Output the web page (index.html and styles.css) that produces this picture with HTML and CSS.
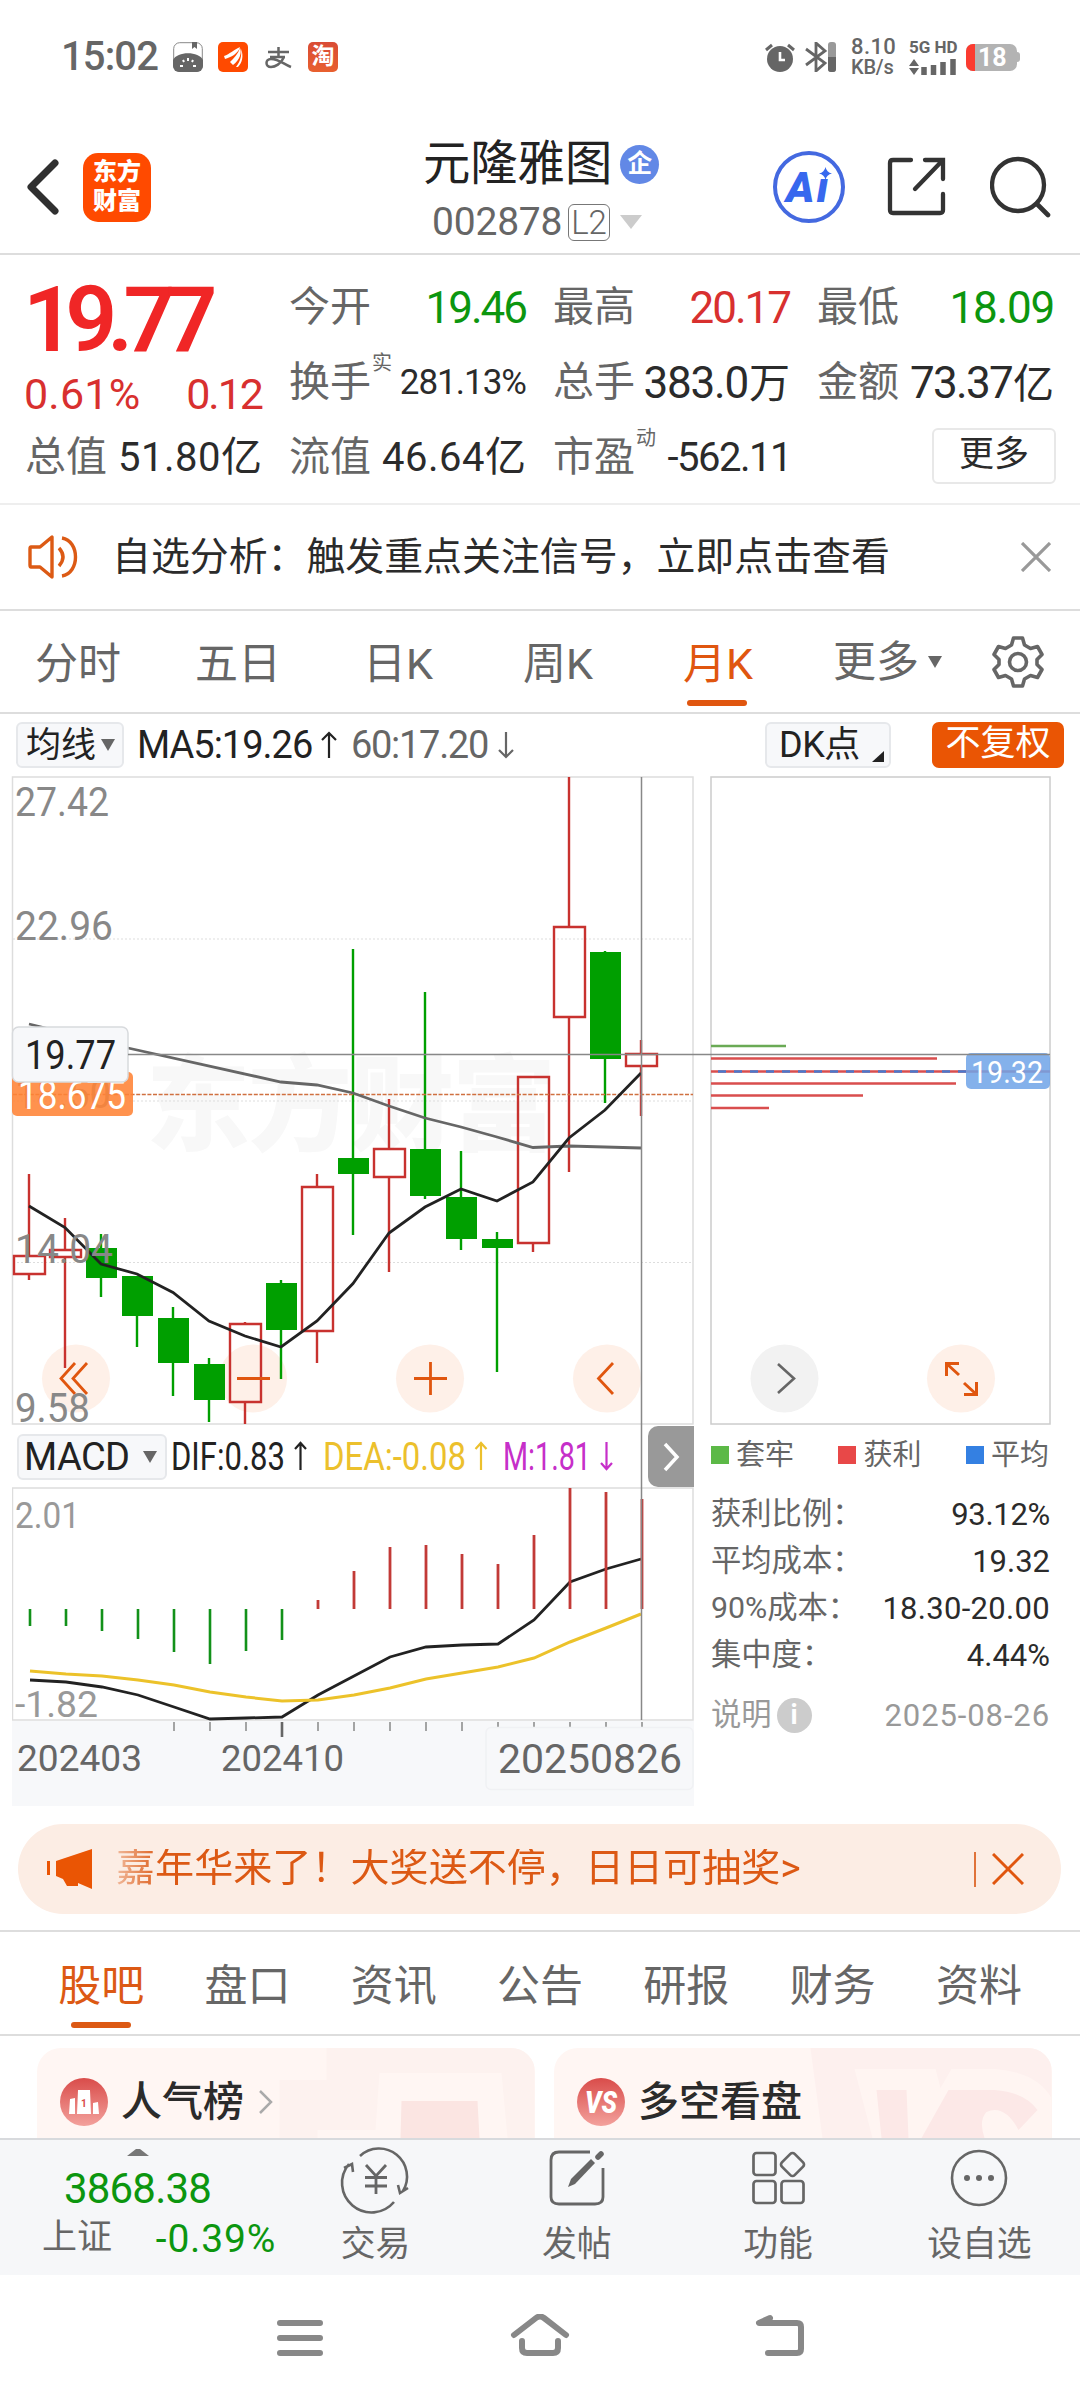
FILE: index.html
```html
<!DOCTYPE html>
<html lang="zh-CN">
<head>
<meta charset="utf-8">
<title>元隆雅图 002878</title>
<link rel="stylesheet" href="styles.css">
</head>
<body>
<div class="statusbar">
  <span class="clock">15:02</span>
  <svg class="app-ic" viewBox="0 0 30 30"><rect x=".7" y=".7" width="28.6" height="28.6" rx="6" fill="#fff" stroke="#888" stroke-width="1"/><path d="M0 18C4 9 26 9 30 18V24a6 6 0 0 1-6 6H6a6 6 0 0 1-6-6z" fill="#666"/><path d="M19 0h5v7l-2.500-2-2.500 2z" fill="#666"/><path d="M15 16v3M10 18l1 2M20 18l-1 2M7 24h3M20 24h3" stroke="#fff" stroke-width="2"/></svg>
  <svg class="app-ic" viewBox="0 0 30 30"><rect width="30" height="30" rx="5" fill="#ff4a00"/><path d="M6 14C12 12 15 8 22 5C20 12 13 15 7 17zM12 20C16 16 20 12 22 6C24 10 22 18 15 23zM18 25c4-5 6-11 5-18 3 7 1 14-3 18z" fill="#fff"/></svg>
  <svg class="app-ic" viewBox="0 0 30 30"><path d="M5 10h21M15.500 5v9M7 15h15M21 15c-3 7-9 10-13 10-6 0-6-8 0-8 8 0 12 5 20 8" fill="none" stroke="#666" stroke-width="2.500"/></svg>
  <span class="taobao">淘</span>
  <svg class="alarm" viewBox="0 0 30 30"><circle cx="15" cy="17" r="13" fill="#666"/><path d="M1 8l6-5M29 8l-6-5" stroke="#666" stroke-width="3"/><path d="M15 10v8h5" fill="none" stroke="#fff" stroke-width="2.600"/></svg>
  <svg class="bt" viewBox="0 0 32 30"><path d="M2 7l19 14-9 8V1l9 8L2 23" fill="none" stroke="#666" stroke-width="2.800"/><rect x="24" y="0" width="8" height="30" rx="3" fill="#999"/><path d="M24 15h8v12a3 3 0 0 1-3 3h-2a3 3 0 0 1-3-3z" fill="#666"/></svg>
  <span class="speed"><b>8.10</b><b>KB/s</b></span>
  <span class="net"><b>5G HD</b><svg viewBox="0 0 48 16" width="48" height="16"><path d="M5 0l5 7H0zM5 16l5-7H0z" fill="#666"/><path d="M15 16V8M24.500 16V6M34 16V3M44 16V0" stroke="#666" stroke-width="5.500"/></svg></span>
  <span class="battery"><i></i>18</span><span class="nub"></span>
</div>

<header class="header">
  <svg class="back" viewBox="0 0 32 56"><path d="M28 4L4 28l24 24" fill="none" stroke="#303030" stroke-width="7" stroke-linecap="round" stroke-linejoin="round"/></svg>
  <div class="logo">东方<br>财富</div>
  <div class="stock">
    <div class="name">元隆雅图<span class="badge-q">企</span></div>
    <div class="code"><span>002878</span><em>L2</em><svg width="22" height="14"><path d="M0 0h22L11 14z" fill="#ccc"/></svg></div>
  </div>
  <div class="ai"><span>A<u>ı</u></span><svg viewBox="0 0 12 12"><path d="M6 0Q7 5 12 6Q7 7 6 12Q5 7 0 6Q5 5 6 0z" fill="#3768ee"/></svg></div>
  <svg class="share" viewBox="0 0 60 60"><path d="M24 3H6Q3 3 3 6V53Q3 56 6 56H53Q56 56 56 53V37M38 3H56V22M55 4L28 32" fill="none" stroke="#333" stroke-width="4.300" stroke-linecap="round"/></svg>
  <svg class="search" viewBox="0 0 62 62"><circle cx="28" cy="29" r="26" fill="none" stroke="#333" stroke-width="4.300"/><path d="M47 48l11 11" stroke="#333" stroke-width="4.600" stroke-linecap="round"/></svg>
</header>

<section class="quote">
  <div class="qcol">
    <div class="price">19.77</div>
    <div class="cell chg"><span>0.61%</span><span>0.12</span></div>
    <div class="cell"><label>总值</label><span class="s">51.80<i>亿</i></span></div>
  </div>
  <div class="qcol">
    <div class="cell"><label>今开</label><span class="n g">19.46</span></div>
    <div class="cell"><label>换手<sup>实</sup></label><span class="xs">281.13%</span></div>
    <div class="cell"><label>流值</label><span class="s">46.64<i>亿</i></span></div>
  </div>
  <div class="qcol">
    <div class="cell"><label>最高</label><span class="n r">20.17</span></div>
    <div class="cell"><label>总手</label><span class="n w">383.0<i>万</i></span></div>
    <div class="cell"><label>市盈<sup>动</sup></label><span class="s neg">-562.11</span></div>
  </div>
  <div class="qcol">
    <div class="cell"><label>最低</label><span class="n g w">18.09</span></div>
    <div class="cell"><label>金额</label><span class="n w y">73.37<i>亿</i></span></div>
    <div class="cell end"><span class="more">更多</span></div>
  </div>
</section>

<div class="notice">
  <svg class="speaker" viewBox="0 0 52 46"><path d="M3 13H12L24 3V43L12 33H3Q2 33 2 31V15Q2 13 3 13z" fill="none" stroke="#dc5a14" stroke-width="3.400" stroke-linejoin="round"/><path d="M31 14q8 9 0 18M34 4c18 3 18 35 0 38" fill="none" stroke="#dc5a14" stroke-width="3.400"/></svg>
  <span>自选分析：触发重点关注信号，立即点击查看</span>
  <svg class="close" viewBox="0 0 30 30"><path d="M1 1l28 28M29 1L1 29" stroke="#999" stroke-width="3.200"/></svg>
</div>

<nav class="ktabs">
  <span>分时</span><span>五日</span><span>日K</span><span>周K</span><span class="on">月K</span>
  <span class="mor">更多<svg width="14" height="12"><path d="M0 0h14L7 12z" fill="#666"/></svg></span>
  <svg class="gear" viewBox="0 0 52 52"><path d="M21.500 2h9l2 7 6 3.500 7-2 4.500 8-5 5v5l5 5-4.500 8-7-2-6 3.500-2 7h-9l-2-7-6-3.500-7 2-4.500-8 5-5v-5l-5-5 4.500-8 7 2 6-3.500z" fill="none" stroke="#666" stroke-width="3.600" stroke-linejoin="round"/><circle cx="26" cy="26" r="8.500" fill="none" stroke="#666" stroke-width="3.600"/></svg>
</nav>

<div class="marow">
  <span class="btn ma">均线<svg width="14" height="12"><path d="M0 0h14L7 12z" fill="#666"/></svg></span>
  <span class="ma5">MA5:19.26</span><svg class="arr" viewBox="0 0 16 28"><path d="M8 27V2M1 9l7-7 7 7" fill="none" stroke="#222" stroke-width="2.200"/></svg>
  <span class="ma60">60:17.20</span><svg class="arr" viewBox="0 0 16 28"><path d="M8 1v25M1 19l7 7 7-7" fill="none" stroke="#666" stroke-width="2.200"/></svg>
  <span class="btn dk">DK点<svg width="12" height="11"><path d="M12 0v11H0z" fill="#222"/></svg></span>
  <span class="fq">不复权</span>
</div>

<section class="charts">
  <div class="left">
    <svg class="kline" viewBox="12 776 682 650">
      <rect x="12.500" y="777" width="680.500" height="647" fill="#fff" stroke="#ddd" stroke-width="1.500"/>
      <text class="wm" x="146" y="1143" textLength="410">东方财富</text>
      <g stroke="#ddd" stroke-width="1" stroke-dasharray="2 2"><path d="M13 939H693M13 1101H693M13 1262.500H693"/></g>
      <g fill="#fef0e8"><circle cx="76" cy="1378.500" r="34"/><circle cx="253" cy="1378.500" r="34"/><circle cx="430" cy="1378.500" r="34"/><circle cx="607" cy="1378.500" r="34"/></g>
      <g stroke="#c8322f" stroke-width="2.400" fill="none">
        <path d="M29 1174V1256M29 1274V1280M65 1218V1250M65 1257V1368M245 1322V1324M245 1402V1424M317 1174V1187M317 1331V1363M389 1099V1149M389 1177V1272M533 1243V1252M569 777V927M569 1017V1172M641 1040V1054M641 1066V1116"/>
        <path d="M14 1256h31v18h-31zM50 1250h31v7h-31zM230 1324h31v78h-31zM302 1187h31v144h-31zM374 1149h31v28h-31zM518 1077h31v166h-31zM554 927h31v90h-31zM626 1054h31v12h-31z"/>
      </g>
      <path d="M101 1234V1297M137 1276V1347M173 1307V1396M209 1358V1422M281 1280V1379M353 949V1235M425 992V1199M461 1151V1250M497 1232V1372M605 951V1103" stroke="#009f00" stroke-width="2.400"/>
      <path d="M86 1248h31v30h-31zM122 1276h31v40h-31zM158 1318h31v45h-31zM194 1364h31v36h-31zM266 1283h31v47h-31zM338 1158h31v16h-31zM410 1149h31v47h-31zM446 1197h31v42h-31zM482 1239h31v9h-31zM590 952h31v107h-31z" fill="#009f00"/>
      <path d="M13 1094.500H693" stroke="#d07040" stroke-width="1.300" stroke-dasharray="4 1.600"/>
      <polyline points="29,1024 128,1048 281,1082 317,1085 353,1093 389,1106 425,1118 461,1127 497,1137 533,1147.500 569,1146 641,1148" fill="none" stroke="#666" stroke-width="2.800"/>
      <polyline points="29,1206 65,1227.500 101,1264 137,1274 173,1292.500 209,1321 245,1336 281,1347 317,1321 353,1283.500 389,1233 425,1207 461,1189 497,1201 533,1182 569,1138 605,1110 641,1073" fill="none" stroke="#222" stroke-width="2.800"/>
      <g stroke="#e0560f" stroke-width="2.800" fill="none"><path d="M75 1363l-14 15.500 14 15.500M87 1363l-14 15.500 14 15.500M237 1378.500h33M414 1378.500h33M430.500 1362v33M613 1363l-14.500 15.500 14.500 15.500"/></g>
      <g class="ylab"><text x="15" y="816" textLength="94" lengthAdjust="spacingAndGlyphs">27.42</text><text x="15" y="940" textLength="98" lengthAdjust="spacingAndGlyphs">22.96</text><text x="15" y="1263" textLength="98" lengthAdjust="spacingAndGlyphs">14.04</text><text x="15" y="1422" textLength="75" lengthAdjust="spacingAndGlyphs">9.58</text><text x="15" y="1108" textLength="96" lengthAdjust="spacingAndGlyphs">18.50</text></g>
      <rect x="12" y="1072" width="121" height="44" rx="5" fill="#ff8336" fill-opacity=".88"/>
      <text class="tag" x="18" y="1109" textLength="108" lengthAdjust="spacingAndGlyphs" fill="#fff">18.675</text>
      <rect x="12.500" y="1027" width="115.500" height="55" rx="6" fill="#f7f8fa" stroke="#d8dadd" stroke-width="1.500"/>
      <text class="tag" x="25" y="1069" textLength="91" lengthAdjust="spacingAndGlyphs" fill="#222">19.77</text>
    </svg>
    <div class="macdbar">
      <span class="btn mc">MACD<svg width="14" height="12"><path d="M0 0h14L7 12z" fill="#666"/></svg></span>
      <svg class="macdvals" viewBox="167 1426 475 61"><g font-size="39">
        <text x="171" y="1470" textLength="114" lengthAdjust="spacingAndGlyphs" fill="#222">DIF:0.83</text>
        <text x="323" y="1470" textLength="143" lengthAdjust="spacingAndGlyphs" fill="#ecc02c">DEA:-0.08</text>
        <text x="503" y="1470" textLength="88" lengthAdjust="spacingAndGlyphs" fill="#c62fc9">M:1.81</text></g>
        <g fill="none" stroke-width="2.200"><path d="M300.500 1470v-27M295 1449l5.500-6 5.500 6" stroke="#222"/><path d="M481 1470v-27M475.500 1449l5.500-6 5.500 6" stroke="#ecc02c"/><path d="M606.500 1442v27M601 1463l5.500 6 5.500-6" stroke="#c62fc9"/></g>
      </svg>
      <span class="expand"><svg width="18" height="30" viewBox="0 0 18 30"><path d="M3 2l12 13L3 28" fill="none" stroke="#fff" stroke-width="3.500"/></svg></span>
    </div>
    <svg class="macd" viewBox="12 1487 682 320">
      <rect x="12" y="1721" width="682" height="85" fill="#f7f8fa"/>
      <rect x="12.500" y="1488" width="680.500" height="232" fill="#fff" stroke="#ddd" stroke-width="1.500"/>
      <g class="ylab m"><text x="15" y="1528" textLength="65" lengthAdjust="spacingAndGlyphs">2.01</text><text x="15" y="1717" textLength="83" lengthAdjust="spacingAndGlyphs">-1.82</text></g>
      <path d="M30 1609V1626M66 1609V1626M102 1609V1631M138 1609V1639M174 1609V1652M210 1609V1664M246 1609V1651M282 1609V1640" stroke="#12911a" stroke-width="2.600"/>
      <polyline points="30,1680 66,1682 102,1687 138,1695 174,1707 210,1719 246,1718 282,1717 318,1695 354,1676 390,1657 426,1647 462,1645 498,1644 534,1620 570,1582 606,1569 641,1559" fill="none" stroke="#222" stroke-width="2.800"/>
      <polyline points="30,1671 66,1674 102,1676 138,1680 174,1685 210,1692 246,1697 282,1701 318,1700 354,1695 390,1688 426,1679 462,1673 498,1667 534,1658 570,1642 606,1628 641,1614" fill="none" stroke="#ecc22a" stroke-width="3"/>
      <path d="M318 1609V1600M354 1609V1571M390 1609V1547M426 1609V1545M462 1609V1554M498 1609V1564M534 1609V1535M570 1609V1488M606 1609V1492M642 1609V1499" stroke="#c23a37" stroke-width="2.800"/>
      <path d="M174 1722v9M210 1722v9M246 1722v9M318 1722v9M354 1722v9M390 1722v9M426 1722v9M462 1722v9M498 1722v9M534 1722v9M570 1722v9M606 1722v9M642 1722v9" stroke="#888" stroke-width="1.500"/>
      <path d="M282 1722v15" stroke="#666" stroke-width="2.600"/>
      <rect x="486" y="1727.500" width="207" height="62" rx="5" fill="#f7f8fa" stroke="#f0f1f4" stroke-width="1.500"/>
      <g fill="#666" font-size="37"><text x="17" y="1771" textLength="125" lengthAdjust="spacingAndGlyphs">202403</text><text x="221" y="1771" textLength="123" lengthAdjust="spacingAndGlyphs">202410</text><text x="498" y="1773" font-size="40" textLength="184" lengthAdjust="spacingAndGlyphs">20250826</text></g>
    </svg>
  </div>
  <div class="right">
    <svg class="chips" viewBox="710 776 341 650">
      <rect x="711" y="777" width="339" height="647" fill="#fff" stroke="#ccc" stroke-width="1.500"/>
      <g stroke-width="2.700"><path d="M711 1046H786" stroke="#6aaa55"/><path d="M711 1058.500H937M711 1071.500H1050M711 1083.500H956M711 1095.500H863M711 1108H769" stroke="#d94e4e"/><path d="M702 1071.500H966" stroke="#4a78cc" stroke-dasharray="8 8"/></g>
      <rect x="966" y="1053" width="84" height="36" rx="5" fill="#70a4e8" fill-opacity=".86"/>
      <text x="971" y="1082.500" font-size="32" textLength="72" lengthAdjust="spacingAndGlyphs" fill="#fff">19.32</text>
      <circle cx="784.500" cy="1378.500" r="34" fill="#f2f2f2"/><circle cx="961" cy="1378.500" r="34" fill="#fef0e8"/>
      <path d="M778 1364l16 14.500-16 14.500" fill="none" stroke="#666" stroke-width="2.600"/>
      <path d="M959 1363.500H946.500V1376M947 1364l12 11M964 1394.500h12.500V1382M976 1394l-12-11" fill="none" stroke="#e0560f" stroke-width="3"/>
    </svg>
    <div class="legend"><span><i class="lg"></i>套牢</span><span><i class="lr"></i>获利</span><span><i class="lb"></i>平均</span></div>
    <div class="stat"><span>获利比例：</span><b class="pct">93.12%</b></div>
    <div class="stat"><span>平均成本：</span><b>19.32</b></div>
    <div class="stat"><span>90%成本：</span><b class="rng">18.30-20.00</b></div>
    <div class="stat"><span>集中度：</span><b>4.44%</b></div>
    <div class="stat note"><span>说明<i>i</i></span><b>2025-08-26</b></div>
  </div>
  <svg class="cross" viewBox="12 776 1039 945"><path d="M641.500 777V1720M128 1054.500H1050" stroke="#888" stroke-width="1.500" fill="none"/></svg>
</section>

<div class="banner">
  <svg class="horn" viewBox="0 0 46 40"><path d="M1.500 12v14" stroke="#ea5504" stroke-width="3"/><path d="M9 12L45 0V40L31 34V37H20L16 30 9 27z" fill="#ea5504"/></svg>
  <span class="btxt">嘉年华来了！大奖送不停，日日可抽奖&gt;</span>
  <i class="vline"></i>
  <svg class="bx" viewBox="0 0 32 32"><path d="M1 1l30 30M31 1L1 31" stroke="#e0560f" stroke-width="3"/></svg>
</div>

<nav class="itabs"><span class="on">股吧</span><span>盘口</span><span>资讯</span><span>公告</span><span>研报</span><span>财务</span><span>资料</span></nav>

<div class="cards">
  <div class="card">
    <svg class="cdeco" viewBox="0 0 497 90"><path d="M289 0H497V90H470L464 25H342L338 82H280V90H242V32H289z" fill="#fdf2ef"/><path d="M364 53h76l2 37h-79z" fill="#fbe5e2"/></svg>
    <svg class="cic" viewBox="0 0 48 48"><defs><linearGradient id="gr" x2="0" y2="1"><stop stop-color="#d94c4a"/><stop offset="1" stop-color="#f3a19c"/></linearGradient></defs><circle cx="24" cy="24" r="24" fill="url(#gr)"/><path d="M10 21l5-1v16H9zM18 12h12l1 24H17zM33 25l5-1 1 12h-6z" fill="#fff"/><text x="21" y="29" font-size="10" font-weight="700" fill="#d94c4a">1</text></svg>
    <b>人气榜</b><svg class="cgo" viewBox="0 0 14 24"><path d="M1 1l11 11L1 23" fill="none" stroke="#aaa" stroke-width="2.500"/></svg>
  </div>
  <div class="card">
    <svg class="cdeco" viewBox="0 0 497 90"><path d="M256 0H497V90H268z" fill="#fdf0ee"/><path d="M300 21H381L386 40 397 21H440Q482 24 497 50V90H318z" fill="#fff5f2"/><path d="M322 42H352L354 90H327zM394 42H440Q470 44 483 62L464 82Q450 56 432 64Q424 72 430 90H367z" fill="#fce8e7"/></svg>
    <svg class="cic" viewBox="0 0 48 48"><circle cx="24" cy="24" r="24" fill="url(#gr)"/><text x="8" y="35" font-size="31" font-weight="900" font-style="italic" fill="#fff" textLength="32" lengthAdjust="spacingAndGlyphs">VS</text></svg>
    <b>多空看盘</b>
  </div>
</div>

<div class="bottombar">
  <div class="index">
    <svg width="22" height="7"><path d="M0 7L9 0h4l9 7z" fill="#777"/></svg>
    <strong>3868.38</strong>
    <p><span>上证</span><em>-0.39%</em></p>
  </div>
  <div class="act"><svg viewBox="0 0 66 60"><path d="M17 8A28 28 0 0 1 60 43M51 54A28 28 0 0 1 6 16M1 20l8-4 1 8M65 40l-8 5-2-8" fill="none" stroke="#666" stroke-width="2.600"/><path d="M23 17l10 11 10-11M33 28v18M22 29.500h22M22 38h22" fill="none" stroke="#666" stroke-width="2.800"/></svg><span>交易</span></div>
  <div class="act"><svg viewBox="0 0 66 60"><path d="M46 4H15Q7 4 7 12V49Q7 56 15 56H51Q59 56 59 49V20" fill="none" stroke="#666" stroke-width="2.800"/><path d="M54 9L57 6" stroke="#666" stroke-width="5.500" stroke-linecap="round"/><path d="M47 11l4 4-20 21-7 3 3-8z" fill="#666"/></svg><span>发帖</span></div>
  <div class="act"><svg viewBox="0 0 66 60"><g fill="none" stroke="#666" stroke-width="2.700"><rect x="8.500" y="5" width="22" height="22" rx="3"/><rect x="8.500" y="33" width="22" height="22" rx="3"/><rect x="36.500" y="33" width="22" height="22" rx="3"/><rect x="38.500" y="7.500" width="18" height="18" rx="3" transform="rotate(45 47.500 16.500)"/></g></svg><span>功能</span></div>
  <div class="act"><svg viewBox="0 0 66 60"><circle cx="33" cy="30" r="27" fill="none" stroke="#666" stroke-width="2.600"/><g fill="#666"><circle cx="21" cy="30" r="3"/><circle cx="33" cy="30" r="3"/><circle cx="45" cy="30" r="3"/></g></svg><span>设自选</span></div>
</div>

<div class="sysnav">
  <svg viewBox="0 0 60 48"><path d="M10 9H50M10 24H50M10 39H50"/></svg>
  <svg viewBox="0 0 60 48"><path d="M4 21L26 4Q30 1 34 4L56 21M12 27V34Q12 39 17 39H43Q48 39 48 34V27"/></svg>
  <svg viewBox="0 0 60 48"><path d="M20 4L9 9H47Q51 9 51 13V35Q51 39 47 39H18"/></svg>
</div>
</body>
</html>
```
FILE: styles.css
```css
* { box-sizing: border-box; }
body {
  margin: 0;
  width: 1080px;
  height: 2400px;
  overflow: hidden;
  background: #fff;
  color: #2b2b2b;
  font-family: Roboto, "Noto Sans CJK SC", sans-serif;
  line-height: 1;
}
svg { display: block; flex: none; }
i, em { font-style: normal; }

/* Status bar */
.statusbar { height: 112px; display: flex; align-items: center; padding: 2px 0 0 61px; color: #666; }
.clock { width: 112px; font-size: 40px; font-weight: 500; letter-spacing: -.9px; white-space: nowrap; }
.app-ic { width: 30px; height: 30px; margin-right: 15px; }
.taobao { width: 30px; height: 30px; border-radius: 5px; background: linear-gradient(#d94c35, #e8602f); color: #fff; font-size: 23px; line-height: 29px; font-weight: 700; text-align: center; }
.alarm { width: 30px; height: 30px; margin-left: 427px; }
.bt { width: 32px; height: 30px; margin-left: 9px; }
.speed { width: 44px; margin-left: 15px; font-size: 20px; display: flex; flex-direction: column; white-space: nowrap; }
.speed b { font-weight: 500; height: 20px; letter-spacing: -.2px; }
.speed b:first-child { font-size: 22px; line-height: 20px; letter-spacing: .4px; }
.net { margin-left: 14px; width: 48px; display: flex; flex-direction: column; gap: 3px; }
.net b { font-size: 17px; white-space: nowrap; }
.battery { position: relative; width: 51px; height: 27px; margin-left: 9px; border-radius: 7px; background: #b3b3b3; color: #fff; font-size: 25px; line-height: 28px; font-weight: 700; padding-left: 12px; overflow: hidden; }
.battery i { position: absolute; left: 0; top: 0; width: 9px; height: 27px; background: #fb3b30; }
.nub { width: 3px; height: 10px; border-radius: 0 3px 3px 0; background: #b3b3b3; }

/* Title bar */
.header { height: 143px; border-bottom: 2px solid #ddd; display: flex; align-items: center; padding: 9px 0 0 27px; }
.back { width: 32px; height: 56px; margin-right: 24px; }
.logo { width: 68px; height: 69px; border-radius: 15px; background: #ff4a00; color: #fff; font-size: 24px; font-weight: 900; line-height: 29px; text-align: center; padding-top: 5px; }
.stock { width: 260px; margin-left: 272px; padding-top: 5px; }
.name { display: flex; align-items: center; font-size: 47.300px; line-height: 52px; white-space: nowrap; color: #222; }
.badge-q { width: 39px; height: 39px; margin-left: 8px; border-radius: 50%; background: #6288e6; color: #fff; font-size: 25px; line-height: 38px; font-weight: 700; text-align: center; }
.code { display: flex; align-items: center; gap: 9px; margin: 13px 0 0 9px; height: 38px; font-size: 39px; color: #666; }
.code span { width: 129px; letter-spacing: -.2px; }
.code em { width: 42px; height: 37px; margin-left: -2px; border: 1.500px solid #777; border-radius: 6px; font-size: 33px; line-height: 36px; text-align: center; font-weight: 300; }
.code svg { margin-left: 1px; }
.ai { position: relative; width: 72px; height: 72px; margin-left: 90px; margin-right: 3px; border: 4px solid #4469e0; border-radius: 50%; }
.ai span { display: block; padding-left: 9px; font-size: 43px; line-height: 64px; font-weight: 900; font-style: italic; color: #3768ee; }
.ai u { text-decoration: none; display: inline-block; margin-left: 2px; }
.ai svg { position: absolute; left: 42px; top: 12px; width: 13px; height: 13px; }
.share { width: 60px; height: 60px; margin-left: 39px; }
.search { width: 62px; height: 62px; margin-left: 43px; }

/* Quote grid */
.quote { height: 250px; border-bottom: 2px solid #eee; display: grid; grid-template-columns: repeat(4, 236px); column-gap: 28px; padding: 15px 0 0 25px; }
.cell { height: 75px; display: flex; align-items: center; justify-content: space-between; white-space: nowrap; }
.cell label { position: relative; font-size: 41px; color: #666; }
.cell sup { position: absolute; left: 83px; top: -9px; font-size: 20px; line-height: 20px; }
.cell span { margin-right: -1px; }
.cell span i { font-size: 41px; letter-spacing: 0; }
.n { font-size: 44px; letter-spacing: -2px; }
.n.w { letter-spacing: -1.200px; }
.n.y { letter-spacing: -1.700px; }
.n i { margin-left: 1px; }
.s { font-size: 40px; letter-spacing: .5px; }
.s.neg { letter-spacing: -1.500px; margin-right: -2px; }
.xs { font-size: 35px; letter-spacing: -1px; }
.g { color: #0c960f; }
.r { color: #d8302f; }
.price { height: 75px; padding-top: 5px; font-size: 91px; line-height: 90px; font-weight: 600; letter-spacing: -9.800px; color: #f02626; margin-left: -2px; }
.chg { padding-top: 24px; font-size: 43px; letter-spacing: .2px; color: #d8302f; }
.chg span:first-child { margin-left: -1px; }
.chg span:last-child { letter-spacing: -2px; }
.cell.end { justify-content: flex-end; }
.cell .more { width: 124px; height: 56px; margin-right: -3px; margin-bottom: 3px; border: 2px solid #e8e8e8; border-radius: 6px; font-size: 35px; line-height: 50px; text-align: center; }

/* Notice */
.notice { height: 106px; border-bottom: 2px solid #ddd; display: flex; align-items: center; padding-left: 28px; font-size: 38.900px; }
.speaker { width: 52px; height: 46px; margin-right: 32px; }
.notice span { width: 909px; }
.close { width: 30px; height: 30px; }

/* Period tabs */
.ktabs { height: 103px; border-bottom: 2px solid #ddd; display: flex; font-size: 43px; line-height: 106px; color: #666; text-align: center; }
.ktabs span { width: 160px; text-indent: -4px; }
.ktabs .on { position: relative; color: #e0560f; }
.ktabs .on::after { content: ""; position: absolute; left: 47px; bottom: 6px; width: 60px; height: 6px; border-radius: 3px; background: #e0560f; }
.ktabs .mor { display: flex; align-items: center; gap: 9px; width: 192px; padding-left: 37px; }
.gear { width: 52px; height: 52px; margin-top: 25px; }

/* Indicator row */
.marow { height: 62px; display: flex; align-items: center; padding-left: 16px; font-size: 38px; letter-spacing: -1px; color: #222; white-space: nowrap; }
.btn { display: flex; align-items: center; height: 46px; border: 2px solid #e6e8eb; border-radius: 6px; background: #f7f8fa; }
.ma { width: 108px; padding-left: 8px; gap: 5px; font-size: 35px; letter-spacing: 0; }
.ma5 { width: 184px; margin-left: 13px; }
.ma60 { width: 147px; margin-left: 14px; color: #666; letter-spacing: -1.300px; }
.arr { width: 16px; height: 28px; }
.dk { width: 126px; margin-left: 251px; padding-left: 12px; font-size: 36px; gap: 12px; letter-spacing: -.5px; }
.dk svg { margin-top: 23px; }
.fq { width: 132px; height: 46px; margin-left: 41px; border-radius: 7px; background: #ea5504; color: #fff; font-size: 35px; letter-spacing: 0; line-height: 44px; text-align: center; }

/* Charts */
.charts { position: relative; height: 1048px; display: flex; gap: 16px; padding-left: 12px; }
.left { width: 682px; height: 1031px; }
.kline { width: 682px; height: 650px; overflow: visible; }
.ylab text { font-size: 40px; fill: #888; }
.ylab.m text { font-size: 36px; fill: #999; }
.tag { font-size: 40px; }
.wm { font-size: 104px; font-weight: 900; fill: #f8f8f8; }
.macdbar { display: flex; height: 61px; align-items: center; padding-left: 5px; }
.mc { width: 150px; padding-left: 5px; gap: 14px; font-size: 38px; letter-spacing: -.6px; color: #222; }
.macdvals { width: 475px; height: 61px; }
.expand { display: flex; align-items: center; justify-content: center; width: 46px; height: 61px; margin-left: 6px; border-radius: 10px 0 0 10px; background: #999; }
.macd { width: 682px; height: 320px; }
.right { width: 341px; }
.chips { width: 341px; height: 650px; }
.legend { display: flex; justify-content: space-between; height: 58px; align-items: center; font-size: 29px; color: #666; padding: 0 2px 0 1px; }
.legend span { display: flex; align-items: center; gap: 7px; }
.legend i { width: 18px; height: 18px; }
.lg { background: #5cb947; }
.lr { background: #e84848; }
.lb { background: #3480e2; }
.stat { display: flex; justify-content: space-between; align-items: center; height: 47px; padding: 0 1px; font-size: 30.300px; white-space: nowrap; }
.legend + .stat { margin-top: 7px; }
.stat span { color: #666; display: flex; align-items: center; }
.stat b { font-weight: 400; font-size: 31px; }
.stat .pct { letter-spacing: -.3px; }
.stat .rng { letter-spacing: .3px; }
.note { margin-top: 13px; }
.note span, .note b { color: #999; }
.stat.note b { letter-spacing: .9px; }
.note i { width: 35px; height: 35px; margin-left: 5px; border-radius: 50%; background: #ccc; color: #fff; font-size: 27px; font-weight: 700; line-height: 35px; text-align: center; }
.cross { position: absolute; left: 12px; top: 0; width: 1039px; height: 945px; }

/* Banner */
.banner { height: 90px; margin: 0 19px 0 18px; border-radius: 45px; background: #fcede4; display: flex; align-items: center; padding-left: 29px; color: #dc5914; }
.horn { width: 46px; height: 40px; margin-right: 23px; }
.btxt { width: 858px; font-size: 39.100px; white-space: nowrap; -webkit-mask-image: linear-gradient(90deg, transparent -10px, rgba(0,0,0,.35) 0, #000 45px); }
.vline { width: 2px; height: 35px; background: #e0733a; }
.bx { width: 32px; height: 32px; margin-left: 16px; }

/* Info tabs */
.itabs { margin-top: 16px; height: 106px; border: solid #ddd; border-width: 2px 0; display: flex; padding-left: 28px; font-size: 43px; line-height: 108px; color: #666; text-align: center; }
.itabs span { width: 146.300px; }
.itabs .on { position: relative; color: #dc5914; }
.itabs .on::after { content: ""; position: absolute; left: 43px; bottom: 6px; width: 60px; height: 6px; border-radius: 3px; background: #dc5914; }

/* Cards */
.cards { display: flex; gap: 19px; height: 102px; padding: 12px 0 0 37px; overflow: hidden; }
.card { position: relative; width: 498px; height: 120px; display: flex; align-items: center; padding: 0 0 12px 23px; border-radius: 24px; background: #fff6f3; overflow: hidden; }
.cdeco { position: absolute; left: 0; top: 0; width: 498px; height: 90px; }
.cic { position: relative; width: 48px; height: 48px; margin-right: 13px; }
.card b { position: relative; font-size: 41px; font-weight: 500; }
.cgo { position: relative; width: 14px; height: 24px; margin-left: 15px; }

/* Bottom toolbar */
.bottombar { display: flex; height: 137px; border-top: 2px solid #d8dadd; background: #f6f7f9; color: #666; }
.index { width: 275px; display: flex; flex-direction: column; align-items: center; padding-top: 9px; color: #0c960f; }
.index strong { font-size: 42px; font-weight: 400; letter-spacing: -.8px; margin-top: 12px; }
.index p { margin: 10px 0 0 42px; width: 234px; display: flex; justify-content: space-between; align-self: flex-start; font-size: 35px; }
.index p em { font-size: 39px; letter-spacing: .8px; }
.index p span { color: #666; }
.act { width: 201.300px; display: flex; flex-direction: column; align-items: center; padding-top: 8px; font-size: 34.800px; }
.act svg { width: 66px; height: 60px; overflow: visible; }
.act span { margin-top: 19px; }

/* System navigation */
.sysnav { display: flex; padding: 39px 0 0 270px; gap: 180px; }
.sysnav svg { width: 60px; height: 48px; fill: none; stroke: #888; stroke-width: 6; stroke-linecap: round; stroke-linejoin: round; }
```
